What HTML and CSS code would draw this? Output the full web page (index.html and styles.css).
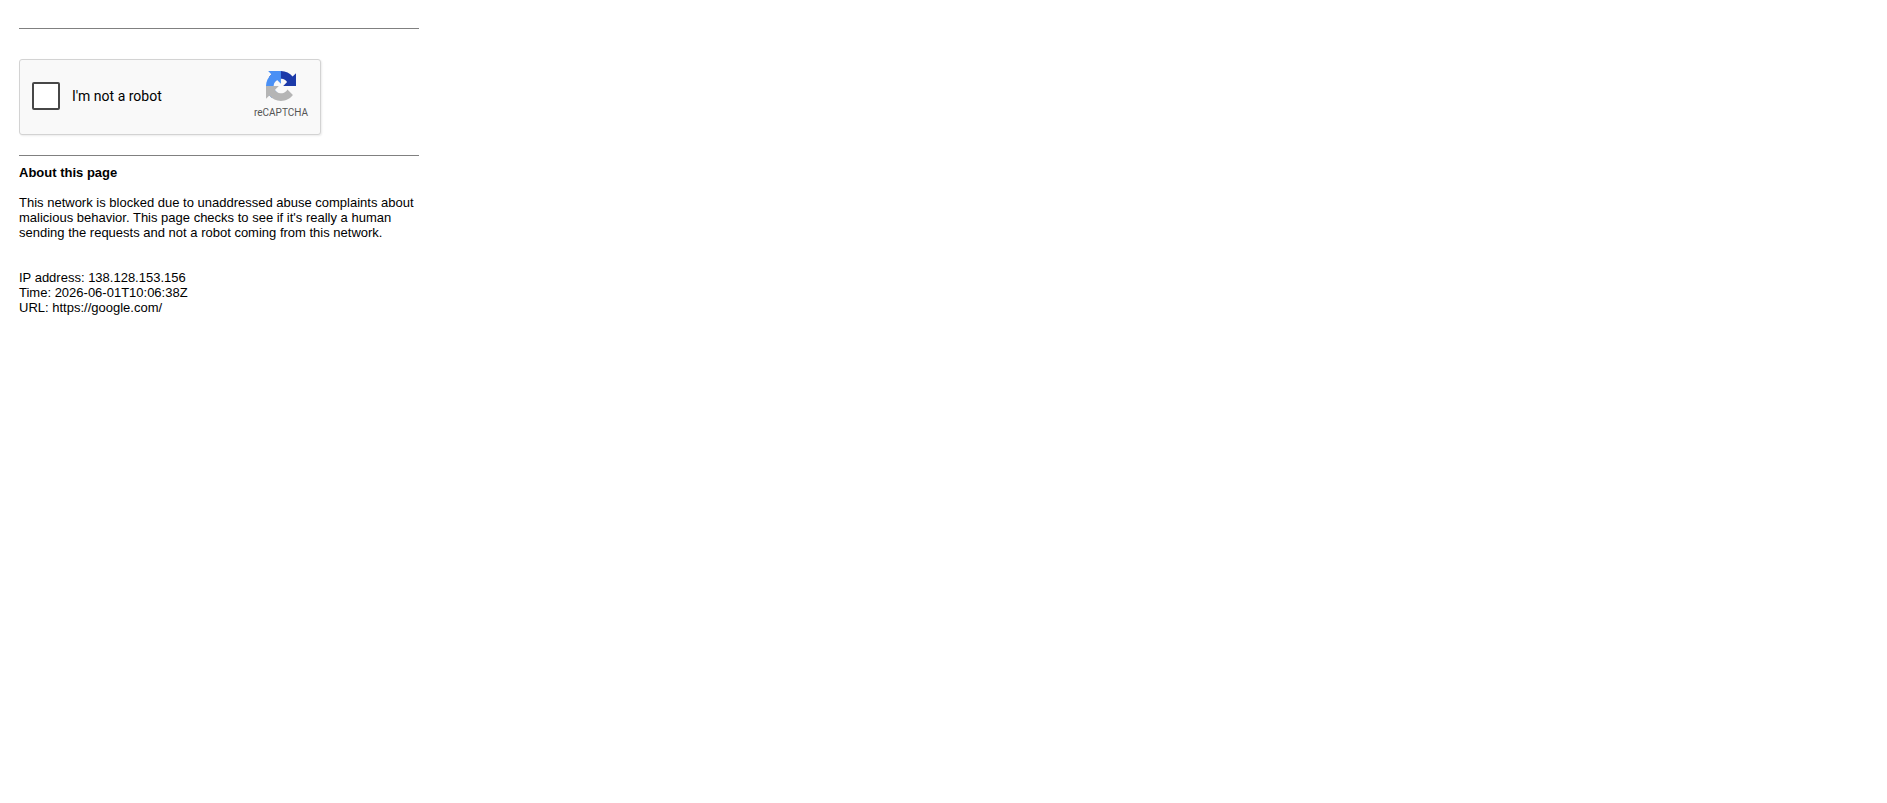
FILE: index.html
```html
<!DOCTYPE html>
<html lang="en">
<head>
<meta charset="utf-8">
<title>https://google.com/</title>
<link rel="stylesheet" href="styles.css">
</head>
<body>
<main class="page">
  <hr class="rule">
  <form class="captcha">
    <label class="check">
      <input class="check-box" type="checkbox">
      <span>I'm not a robot</span>
    </label>
    <div class="brand">
      <svg class="brand-logo" viewBox="0 0 64 64" aria-hidden="true">
        <path fill="#1c3aa9" d="M64 31.955l-.033-1.37V4.687l-7.16 7.16C50.948 4.674 42.033.093 32.05.093c-10.4 0-19.622 4.96-25.458 12.64l11.736 11.86a15.55 15.55 0 0 1 4.754-5.334c2.05-1.6 4.952-2.906 8.968-2.906.485 0 .86.057 1.135.163 4.976.393 9.288 3.14 11.828 7.124l-8.307 8.307L64 31.953"/>
        <path fill="#4a90f5" d="M31.862.094l-1.37.033H4.594l7.16 7.16C4.58 13.147 0 22.06 0 32.046c0 10.4 4.96 19.622 12.64 25.458L24.5 45.768a15.55 15.55 0 0 1-5.334-4.754c-1.6-2.05-2.906-4.952-2.906-8.968 0-.485.057-.86.163-1.135.393-4.976 3.14-9.288 7.124-11.828l8.307 8.307L31.86.095"/>
        <path fill="#b5b5b5" d="M.001 32.045l.033 1.37v25.898l7.16-7.16c5.86 7.173 14.774 11.754 24.76 11.754 10.4 0 19.622-4.96 25.458-12.64l-11.736-11.86a15.55 15.55 0 0 1-4.754 5.334c-2.05 1.6-4.952 2.906-8.968 2.906-.485 0-.86-.057-1.135-.163-4.976-.393-9.288-3.14-11.828-7.124l8.307-8.307c-10.522.04-22.4.066-27.295-.005"/>
      </svg>
      <span>reCAPTCHA</span>
    </div>
  </form>
  <hr class="rule">
  <h1 class="title">About this page</h1>
  <p class="reason">This network is blocked due to unaddressed abuse complaints about malicious behavior. This page checks to see if it's really a human sending the requests and not a robot coming from this network.</p>
  <p class="details">IP address: 138.128.153.156<br>Time: 2026-06-01T10:06:38Z<br>URL: https://google.com/</p>
</main>
</body>
</html>
```
FILE: styles.css
```css
* {
  box-sizing: border-box;
}

body {
  margin: 0;
  padding: 28px 19px;
  background: #fff;
  color: #000;
  font: 13px/15px "Liberation Sans", Arial, sans-serif;
}

.page {
  max-width: 400px;
}

.rule {
  height: 1px;
  margin: 0;
  border: 0;
  background: #808080;
}

.captcha {
  display: flex;
  justify-content: space-between;
  width: 302px;
  max-width: 100%;
  margin: 30px 0 20px;
  padding: 11px 12px 13px;
  border: 1px solid #d3d3d3;
  border-radius: 3px;
  background: #f9f9f9;
  box-shadow: 1px 1px 2px rgba(0, 0, 0, 0.08);
  font-family: Roboto, "Liberation Sans", sans-serif;
}

.check {
  display: flex;
  align-items: center;
  gap: 12px;
  font-size: 14px;
  line-height: 17px;
}

.check-box {
  appearance: none;
  width: 28px;
  height: 28px;
  margin: 0;
  border: 2px solid #474747;
  border-radius: 2px;
  background: #fff;
}

.brand {
  display: flex;
  flex-direction: column;
  align-items: center;
  gap: 4px;
  color: #555;
  font-size: 10px;
  line-height: 16px;
}

.brand-logo {
  width: 30px;
  height: 30px;
}

.title {
  margin: 9px 0 15px;
  font-size: 13px;
  line-height: 15px;
}

.reason {
  margin: 0 0 30px;
}

.details {
  margin: 0;
}
```
